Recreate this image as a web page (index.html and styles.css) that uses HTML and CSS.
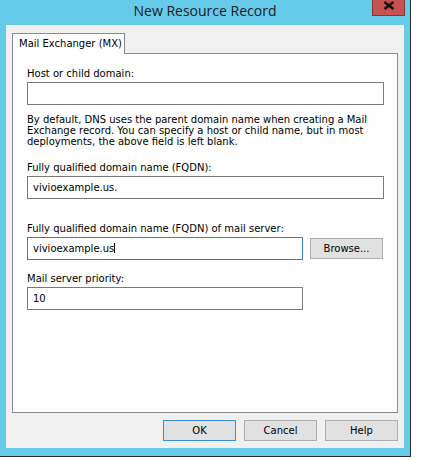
FILE: index.html
```html
<!DOCTYPE html>
<html lang="en">
<head>
    <meta charset="UTF-8">
    <meta name="viewport" content="width=device-width, initial-scale=1.0">
    <title>New Resource Record</title>
    <link rel="stylesheet" href="styles.css">
</head>
<body>
    <div class="window">
        <div class="titlebar">
            <span class="title">New Resource Record</span>
            <button class="close" title="Close">
                <svg width="12" height="9" viewBox="0 0 12 9">
                    <path d="M1.5 1 L10.5 8 M10.5 1 L1.5 8" stroke="#111" stroke-width="2.4" fill="none"/>
                </svg>
            </button>
        </div>

        <div class="client">
            <div class="tabs">
                <div class="tab">Mail Exchanger (MX)</div>
            </div>

            <div class="panel">
                <div class="label">Host or child domain:</div>
                <div class="field wide"></div>

                <p class="hint">By default, DNS uses the parent domain name when creating a Mail Exchange record. You can specify a host or child name, but in most deployments, the above field is left blank.</p>

                <div class="label label-fqdn">Fully qualified domain name (FQDN):</div>
                <div class="field wide">vivioexample.us.</div>

                <div class="label label-server">Fully qualified domain name (FQDN) of mail server:</div>
                <div class="field-row">
                    <div class="field short focused">vivioexample.us<span class="caret"></span></div>
                    <button class="btn">Browse...</button>
                </div>

                <div class="label label-priority">Mail server priority:</div>
                <div class="field short">10</div>
            </div>

            <div class="buttons">
                <button class="btn default">OK</button>
                <button class="btn">Cancel</button>
                <button class="btn">Help</button>
            </div>
        </div>
    </div>
</body>
</html>
```

FILE: styles.css
```css
:root {
    --frame: #65cbe9;
    --frame-edge: #2b2b2b;
    --client-bg: #f0f0f0;
    --panel-border: #898c95;
    --field-border: #7a7a7a;
    --focus-border: #3c7fb1;
    --btn-bg: #e1e1e1;
    --btn-border: #adadad;
    --default-border: #3d8ed6;
    --close-bg: #c75050;
    --close-border: #7a3a3a;
    --text: #000000;
}

body {
    margin: 0;
    background: #ffffff;
    font-family: 'DejaVu Sans', Verdana, sans-serif;
    font-size: 10px;
    color: var(--text);
}

.window {
    width: 410px;
    height: 456px;
    background: var(--frame);
    border-right: 1px solid var(--frame-edge);
    border-bottom: 1px solid var(--frame-edge);
}

/* title bar */
.titlebar {
    height: 25px;
    display: grid;
    grid-template-columns: 1fr auto 1fr;
}
.title {
    grid-column: 2;
    font-family: 'Open Sans', 'Noto Sans', sans-serif;
    font-size: 14px;
    line-height: 21px;
    color: #1a1a1a;
}
.close {
    grid-column: 3;
    justify-self: end;
    align-self: start;
    margin-right: 5px;
    width: 33px;
    height: 16px;
    padding: 0 0 4px 0;
    background: var(--close-bg);
    border: 1px solid var(--close-border);
    border-top: none;
    display: flex;
    align-items: center;
    justify-content: center;
}

/* client area */
.client {
    margin-left: 6px;
    width: 398px;
    height: 423px;
    box-sizing: border-box;
    background: var(--client-bg);
    padding: 8px 6px 0 6px;
}

.tabs {
    display: flex;
}
.tab {
    position: relative;
    z-index: 1;
    width: 113px;
    height: 21px;
    box-sizing: border-box;
    margin-bottom: -1px;
    padding-left: 6px;
    line-height: 19px;
    background: #ffffff;
    border: 1px solid var(--panel-border);
    border-bottom: none;
}

.panel {
    height: 360px;
    box-sizing: border-box;
    background: #ffffff;
    border: 1px solid var(--panel-border);
    padding: 13px 12px 0 14px;
}

.label {
    line-height: 13px;
    margin-bottom: 2px;
}
.label-fqdn {
    margin-top: 14px;
}
.label-server {
    margin-top: 23px;
}
.label-priority {
    margin-top: 12px;
}

.field {
    height: 23px;
    box-sizing: border-box;
    border: 1px solid var(--field-border);
    background: #ffffff;
    padding-left: 5px;
    line-height: 21px;
    white-space: nowrap;
}
.field.wide {
    width: 357px;
}
.field.short {
    width: 276px;
}
.field.focused {
    border-color: var(--focus-border);
}
.caret {
    display: inline-block;
    width: 0;
    height: 10px;
    border-right: 1px solid #000;
    vertical-align: -1px;
}

.field-row {
    display: flex;
    align-items: center;
    gap: 7px;
}

.hint {
    margin: 9px 0 0 0;
    line-height: 11px;
    width: 345px;
}

/* buttons */
.btn {
    width: 73px;
    height: 21px;
    padding: 0;
    background: var(--btn-bg);
    border: 1px solid var(--btn-border);
    font-family: inherit;
    font-size: 10px;
    color: var(--text);
}
.btn.default {
    border-color: var(--default-border);
}

.buttons {
    display: flex;
    justify-content: flex-end;
    gap: 8px;
    margin-top: 7px;
}
```
